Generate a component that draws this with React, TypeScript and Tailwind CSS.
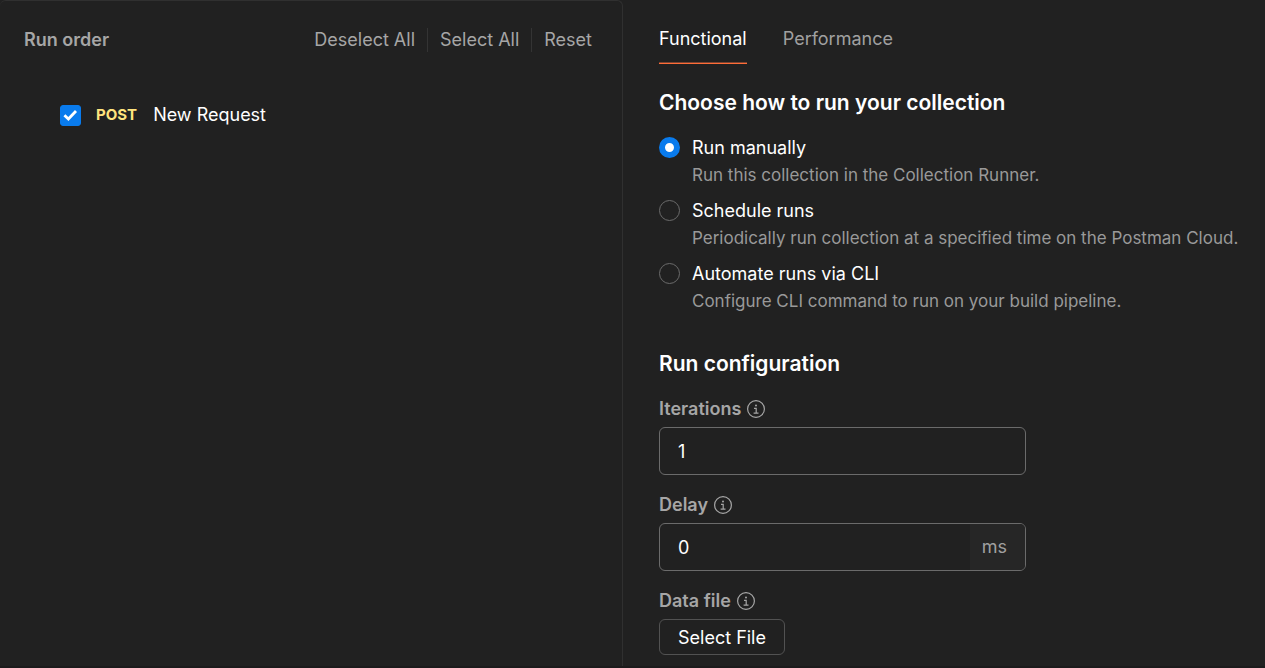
import { useState } from "react";
import type { ReactNode } from "react";

const runModes = [
  {
    id: "manual",
    title: "Run manually",
    description: "Run this collection in the Collection Runner.",
  },
  {
    id: "schedule",
    title: "Schedule runs",
    description:
      "Periodically run collection at a specified time on the Postman Cloud.",
  },
  {
    id: "cli",
    title: "Automate runs via CLI",
    description: "Configure CLI command to run on your build pipeline.",
  },
];

function InfoIcon() {
  return (
    <svg
      viewBox="0 0 18 18"
      className="size-[18px] shrink-0"
      fill="none"
      stroke="currentColor"
      aria-hidden="true"
    >
      <circle cx="9" cy="9" r="8.4" strokeWidth="1.2" />
      <circle cx="9" cy="5.4" r="1" fill="currentColor" stroke="none" />
      <path d="M7 8.3h2.2v4.8M6.6 13.1h4.9" strokeWidth="1.2" />
    </svg>
  );
}

function FieldLabel({ htmlFor, children }: { htmlFor: string; children: ReactNode }) {
  return (
    <label
      htmlFor={htmlFor}
      className="flex items-center gap-1.5 font-semibold leading-7 text-[#a6a6a6]"
    >
      {children}
      <InfoIcon />
    </label>
  );
}

function RunOrder() {
  const [checked, setChecked] = useState(true);
  const action = "px-3 leading-6 cursor-pointer";

  return (
    <section className="rounded-t-md border-t border-r border-[#303030] pt-[27px] pr-[18px] pl-6">
      <header className="flex items-center justify-between text-[#a6a6a6]">
        <h2 className="font-semibold leading-6">Run order</h2>
        <div className="flex divide-x divide-[#343434]">
          <button type="button" className={action} onClick={() => setChecked(false)}>
            Deselect All
          </button>
          <button type="button" className={action} onClick={() => setChecked(true)}>
            Select All
          </button>
          <button type="button" className={action} onClick={() => setChecked(true)}>
            Reset
          </button>
        </div>
      </header>
      <label className="mt-[49px] flex items-center pl-9 leading-7 text-white">
        <span className="grid size-[21px] place-items-center">
          <input
            type="checkbox"
            checked={checked}
            onChange={(e) => setChecked(e.target.checked)}
            className="peer col-start-1 row-start-1 size-[21px] appearance-none rounded-[3px] border border-[#6b6b6b] checked:border-[#097bed] checked:bg-[#097bed]"
          />
          <svg
            viewBox="0 0 21 21"
            className="pointer-events-none invisible col-start-1 row-start-1 size-[21px] peer-checked:visible"
            fill="none"
            stroke="white"
            strokeWidth="2.8"
            aria-hidden="true"
          >
            <path d="M4.4 10.2 8.4 14 16 6" />
          </svg>
        </span>
        <span className="ml-[15px] text-[15px] font-bold text-[#ffe47e]">POST</span>
        <span className="ml-4">New Request</span>
      </label>
    </section>
  );
}

export default function App() {
  const [mode, setMode] = useState("manual");
  const [iterations, setIterations] = useState("1");
  const [delay, setDelay] = useState("0");

  return (
    <div className="grid min-h-screen grid-cols-[623fr_642fr] border-b-2 border-[#1c1b1c] bg-[#212121] font-['Inter',sans-serif] text-[18px]">
      <RunOrder />
      <main className="pt-[25px] pr-6 pl-9">
        <div role="tablist" className="flex gap-9">
          <button
            type="button"
            role="tab"
            aria-selected="true"
            className="border-b border-[#ff6c37] pb-2.5 leading-7 text-white shadow-[inset_0_-1px_#7a4331]"
          >
            Functional
          </button>
          <button
            type="button"
            role="tab"
            aria-selected="false"
            className="border-b border-transparent pb-2.5 leading-7 text-[#a0a0a0]"
          >
            Performance
          </button>
        </div>

        <h2 className="mt-[25px] text-[21px] leading-7 font-semibold text-white">
          Choose how to run your collection
        </h2>
        <div role="radiogroup" className="mt-[17px] flex flex-col gap-[9px]">
          {runModes.map((item) => (
            <label key={item.id} className="flex gap-3">
              <input
                type="radio"
                name="run-mode"
                checked={mode === item.id}
                onChange={() => setMode(item.id)}
                className="mt-[3px] size-[21px] shrink-0 appearance-none rounded-full border border-[#6b6b6b] checked:border-[6px] checked:border-[#097bed] checked:bg-white"
              />
              <span>
                <span className="block leading-7 text-white">{item.title}</span>
                <span className="block text-[17px] leading-[26px] text-[#999999]">
                  {item.description}
                </span>
              </span>
            </label>
          ))}
        </div>

        <h2 className="mt-9 text-[21px] leading-7 font-semibold text-white">
          Run configuration
        </h2>
        <div className="mt-[17px] flex flex-col items-start gap-4">
          <div className="flex w-full max-w-[367px] flex-col gap-1">
            <FieldLabel htmlFor="iterations">Iterations</FieldLabel>
            <input
              id="iterations"
              value={iterations}
              onChange={(e) => setIterations(e.target.value)}
              className="h-12 w-full rounded-md border border-[#6b6b6b] bg-transparent px-[18px] text-white outline-none"
            />
          </div>
          <div className="flex w-full max-w-[367px] flex-col gap-1">
            <FieldLabel htmlFor="delay">Delay</FieldLabel>
            <div className="flex h-12 overflow-hidden rounded-md border border-[#6b6b6b]">
              <input
                id="delay"
                value={delay}
                onChange={(e) => setDelay(e.target.value)}
                className="min-w-0 flex-1 bg-transparent px-[18px] text-white outline-none"
              />
              <span className="flex items-center bg-[#262626] pr-[18px] pb-px pl-3 text-[#a0a0a0]">
                ms
              </span>
            </div>
          </div>
          <div className="flex flex-col items-start gap-1">
            <FieldLabel htmlFor="data-file">Data file</FieldLabel>
            <button
              id="data-file"
              type="button"
              className="h-9 rounded-md border border-[#525252] px-[18px] text-white"
            >
              Select File
            </button>
          </div>
        </div>
      </main>
    </div>
  );
}
